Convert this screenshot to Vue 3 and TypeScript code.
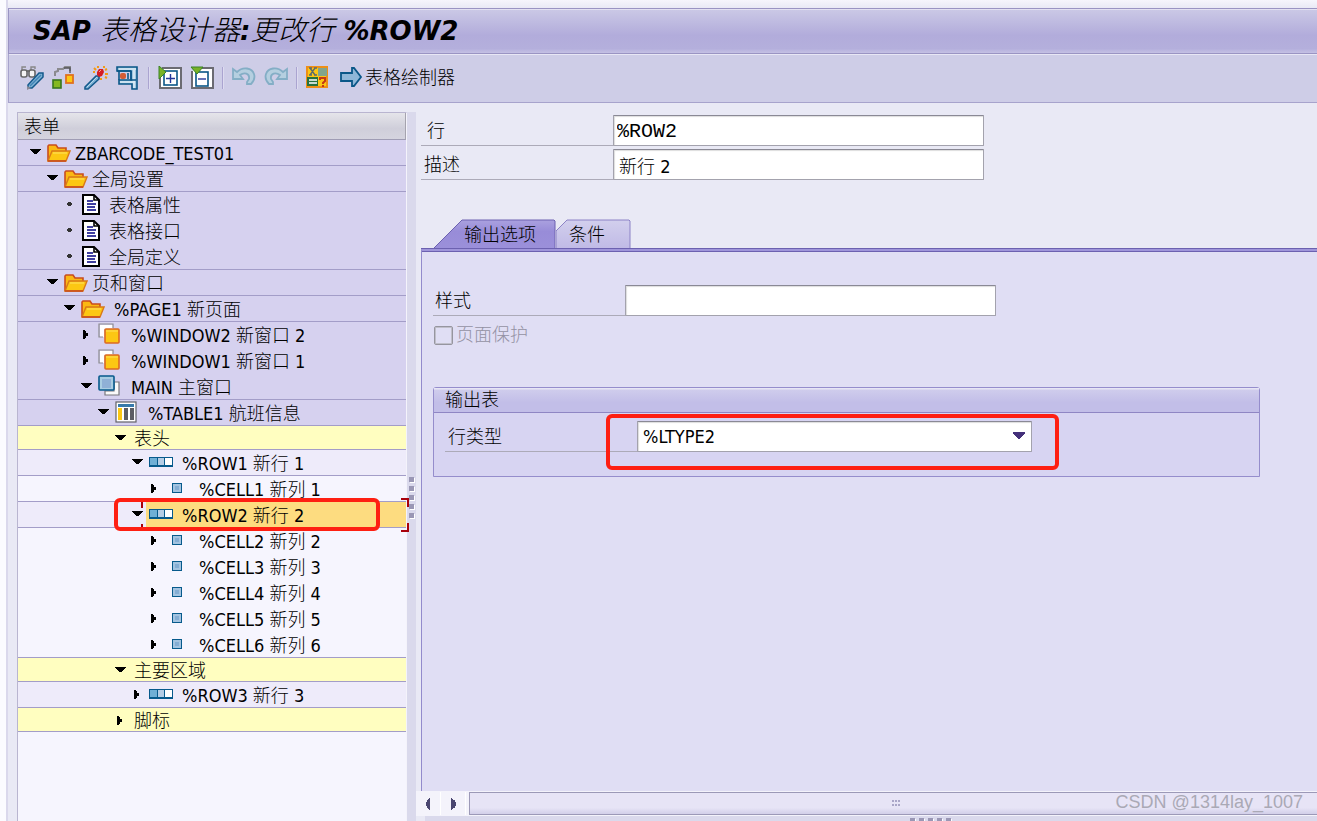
<script setup lang="ts">
import { ref } from 'vue'

type Icon = 'folder' | 'doc' | 'window' | 'main' | 'table' | 'row' | 'cell' | 'none'
type State = 'open' | 'closed' | 'leaf'
type Tone = 'base' | 'section' | 'line' | 'plain'

interface TreeNode {
  level: number
  state: State
  icon: Icon
  name?: string
  text: string
  tone: Tone
  ruled?: boolean
  selected?: boolean
}

const nodes: TreeNode[] = [
  { level: 0, state: 'open', icon: 'folder', text: 'ZBARCODE_TEST01', tone: 'base', ruled: true },
  { level: 1, state: 'open', icon: 'folder', text: '全局设置', tone: 'base', ruled: true },
  { level: 2, state: 'leaf', icon: 'doc', text: '表格属性', tone: 'base' },
  { level: 2, state: 'leaf', icon: 'doc', text: '表格接口', tone: 'base' },
  { level: 2, state: 'leaf', icon: 'doc', text: '全局定义', tone: 'base', ruled: true },
  { level: 1, state: 'open', icon: 'folder', text: '页和窗口', tone: 'base', ruled: true },
  { level: 2, state: 'open', icon: 'folder', name: '%PAGE1', text: '新页面', tone: 'base', ruled: true },
  { level: 3, state: 'closed', icon: 'window', name: '%WINDOW2', text: '新窗口 2', tone: 'base' },
  { level: 3, state: 'closed', icon: 'window', name: '%WINDOW1', text: '新窗口 1', tone: 'base' },
  { level: 3, state: 'open', icon: 'main', name: 'MAIN', text: '主窗口', tone: 'base', ruled: true },
  { level: 4, state: 'open', icon: 'table', name: '%TABLE1', text: '航班信息', tone: 'base', ruled: true },
  { level: 5, state: 'open', icon: 'none', text: '表头', tone: 'section', ruled: true },
  { level: 6, state: 'open', icon: 'row', name: '%ROW1', text: '新行 1', tone: 'line', ruled: true },
  { level: 7, state: 'closed', icon: 'cell', name: '%CELL1', text: '新列 1', tone: 'plain', ruled: true },
  { level: 6, state: 'open', icon: 'row', name: '%ROW2', text: '新行 2', tone: 'line', ruled: true, selected: true },
  { level: 7, state: 'closed', icon: 'cell', name: '%CELL2', text: '新列 2', tone: 'plain' },
  { level: 7, state: 'closed', icon: 'cell', name: '%CELL3', text: '新列 3', tone: 'plain' },
  { level: 7, state: 'closed', icon: 'cell', name: '%CELL4', text: '新列 4', tone: 'plain' },
  { level: 7, state: 'closed', icon: 'cell', name: '%CELL5', text: '新列 5', tone: 'plain' },
  { level: 7, state: 'closed', icon: 'cell', name: '%CELL6', text: '新列 6', tone: 'plain', ruled: true },
  { level: 5, state: 'open', icon: 'none', text: '主要区域', tone: 'section', ruled: true },
  { level: 6, state: 'closed', icon: 'row', name: '%ROW3', text: '新行 3', tone: 'line', ruled: true },
  { level: 5, state: 'closed', icon: 'none', text: '脚标', tone: 'section', ruled: true },
]

const rowName = ref('%ROW2')
const description = ref('新行 2')
const styleName = ref('')
const lineType = ref('%LTYPE2')
</script>

<template>
  <div class="app">
    <header class="titlebar">
      <h1>SAP <span class="han">表格设计器</span>:<span class="han">更改行</span> %ROW2</h1>
    </header>

    <div class="toolbar" role="toolbar" aria-label="工具栏">
      <button class="tool" type="button" aria-label="显示/更改">
        <svg viewBox="0 0 24 24">
          <path d="M2 4V1h4M11 4V1h4v2" fill="none" stroke="#888" stroke-width="1.4" />
          <rect x="1" y="4" width="6" height="7" rx="2" fill="#f4f4f4" stroke="#666" stroke-width="1.6" />
          <rect x="9" y="4" width="6" height="7" rx="2" fill="#f4f4f4" stroke="#666" stroke-width="1.6" />
          <path d="M6 5h4" stroke="#666" stroke-width="1.6" />
          <path d="M8 19L19 7h4v4L12 22H8z" fill="#7fb3d6" stroke="#145a8c" stroke-width="1.5" />
          <path d="M10 20L21 9" stroke="#3f83b4" stroke-width="1.4" />
          <path d="M7 24v-4l4 2z" fill="#8a8a96" />
        </svg>
      </button>
      <button class="tool" type="button" aria-label="检查">
        <svg viewBox="0 0 24 24">
          <path d="M3 10V6l3-1V3h5l2-2h5v4" fill="none" stroke="#8a8a8e" stroke-width="2" />
          <path d="M12 2h6v5" fill="none" stroke="#55555a" stroke-width="1.4" />
          <rect x="1" y="14" width="8" height="8" fill="#84b81f" stroke="#38761d" stroke-width="1.6" />
          <rect x="14" y="9" width="7" height="8" fill="#fcc713" stroke="#e0701e" stroke-width="1.8" />
        </svg>
      </button>
      <button class="tool" type="button" aria-label="激活">
        <svg viewBox="0 0 24 24">
          <path d="M10 2l2 2M14 0v2M20 0v2M23 3l-2 1M24 8h-3M21 11l2 1M17 12v2M9 6h2" stroke="#f39a16" stroke-width="2" />
          <path d="M1 21L12 10h3v3L4 23H1z" fill="#7fb3d6" stroke="#145a8c" stroke-width="1.6" />
          <path d="M3 21L13 11" stroke="#b8d8ec" />
          <path d="M13 6l2-3h4l1 3-2 4-3 1-2-2z" fill="#d51d25" />
          <path d="M15 6l2-2" stroke="#ff9c87" />
        </svg>
      </button>
      <button class="tool" type="button" aria-label="测试">
        <svg viewBox="0 0 24 24">
          <path d="M1 1h20v22h-5v-5H3v-4h12V5H1z" fill="#9fc6df" stroke="#0a5788" stroke-width="1.6" />
          <path d="M3 3h17M4 16h15M18 4v18" stroke="#dcecf6" stroke-width="1.6" />
          <path d="M15 5v9h5M1 5h14" fill="none" stroke="#0a5788" stroke-width="1.4" />
          <path d="M3 5v9" stroke="#0a5788" stroke-width="1.6" />
          <rect x="4" y="7" width="6" height="6" rx="2" fill="#d35c34" />
          <path d="M12 7v6" stroke="#0a5788" stroke-width="1.6" />
        </svg>
      </button>
      <span class="sep"></span>
      <button class="tool" type="button" aria-label="展开">
        <svg viewBox="0 0 24 24">
          <path d="M4 2h19v20H2V10" fill="#fff" stroke="#6b6b72" stroke-width="2" />
          <rect x="6" y="5" width="13" height="14" fill="#fff" stroke="#0a5788" stroke-width="1.6" />
          <path d="M8 12.500h9M12.500 8v9" stroke="#24379a" stroke-width="1.4" />
          <path d="M1 0l7 6-7 7z" fill="#78b226" stroke="#3b8227" />
        </svg>
      </button>
      <button class="tool" type="button" aria-label="压缩">
        <svg viewBox="0 0 24 24">
          <path d="M12 2h11v20H2V5" fill="#fff" stroke="#6b6b72" stroke-width="2" />
          <rect x="6" y="6" width="12" height="14" fill="#fff" stroke="#0a5788" stroke-width="1.6" />
          <path d="M8 13h8" stroke="#24379a" stroke-width="1.4" />
          <path d="M1 1h12L7 8z" fill="#78b226" stroke="#3b8227" />
        </svg>
      </button>
      <span class="sep"></span>
      <button class="tool" type="button" aria-label="撤销">
        <svg viewBox="0 0 24 24">
          <path d="M1 3v10h10l-3-4c4-3 10-2 9 4l-2 3v2h4c3-3 4-7 3-10-2-6-11-8-17-2z" fill="#b5cfe0" stroke="#84aec6" stroke-width="1.8" />
        </svg>
      </button>
      <button class="tool" type="button" aria-label="重做">
        <svg viewBox="0 0 24 24">
          <path d="M23 3v10H13l3-4c-4-3-10-2-9 4l2 3v2H5C2 15 1 11 2 8c2-6 11-8 17-2z" fill="#b5cfe0" stroke="#84aec6" stroke-width="1.8" />
        </svg>
      </button>
      <span class="sep"></span>
      <button class="tool" type="button" aria-label="字段列表">
        <svg viewBox="0 0 24 24">
          <rect x="1" y="1" width="20" height="20" fill="#fcc713" stroke="#ee8f16" stroke-width="2" />
          <rect x="12" y="2" width="9" height="8" fill="#82a58b" />
          <rect x="1" y="11" width="11" height="9" fill="#27713d" />
          <path d="M3 14h8M3 17h8" stroke="#fff" stroke-width="1.6" />
          <path d="M4 2l5 7M9 2L4 9M3 2h3M8 2h3M3 9h3M8 9h3" stroke="#5c6b6b" stroke-width="1.4" />
          <path d="M14 14v-2h5v3l-2 2v1M17 19v2" fill="none" stroke="#c53a16" stroke-width="2" />
        </svg>
      </button>
      <button class="tool labelled" type="button">
        <svg viewBox="0 0 24 24">
          <path d="M1 7h11V2h2l7 9-7 9h-2v-5H1z" fill="#8fb7d8" stroke="#0a5788" stroke-width="1.8" />
        </svg>
        <span>表格绘制器</span>
      </button>
    </div>

    <main class="work">
      <section class="tree" aria-label="表单">
        <h2 class="tree-head">表单</h2>
        <div role="tree" aria-label="表单">
          <div
            v-for="(node, i) in nodes"
            :key="i"
            class="node"
            :class="[node.tone, { ruled: node.ruled, selected: node.selected }]"
            :style="{ '--level': node.level }"
            role="treeitem"
            :aria-level="node.level + 1"
            :aria-selected="!!node.selected"
          >
            <button v-if="node.state !== 'leaf'" class="twist" type="button" :aria-label="node.name || node.text">
              <svg viewBox="0 0 14 14">
                <path v-if="node.state === 'open'" d="M2 4h11v1h-1v1h-1v1h-1v1H9v1H6V8H5V7H4V6H3V5H2z" fill="#000" />
                <path v-else d="M4 3h2v1h1v2h2v3H7v2H6v1H4z" fill="#000" />
              </svg>
            </button>
            <span v-else class="twist">
              <svg viewBox="0 0 14 14"><path d="M5 6h5v2H5zM6 5h3v4H6z" fill="#333" /></svg>
            </span>
            <span class="content" :class="{ named: node.name, bare: node.icon === 'none' }">
              <svg v-if="node.icon === 'folder'" class="icon" viewBox="0 -2 24 24">
                <path d="M1 18V3l1-1h7l2 3h8v3" fill="#fbb812" stroke="#c94d1e" stroke-width="1.6" />
                <path d="M1 18L5 8h18l-4 10z" fill="#fcc713" stroke="#d97a18" stroke-width="1.4" />
                <path d="M1 18h18" stroke="#c94d1e" stroke-width="1.6" />
                <path d="M6 10h14" stroke="#ffe263" />
              </svg>
              <svg v-else-if="node.icon === 'doc'" class="icon" viewBox="0 0 24 24">
                <path d="M2 2h11l5 5v14H2z" fill="#fff" stroke="#000" stroke-width="2" />
                <path d="M13 2v5h5" fill="none" stroke="#000" stroke-width="1.6" />
                <path d="M6 8h6M6 11h9M6 14h8M6 17h9" stroke="#000080" stroke-width="1.6" />
              </svg>
              <svg v-else-if="node.icon === 'window'" class="icon" viewBox="0 0 24 24">
                <path d="M2 2h13v4H6v8H2z" fill="#fff" />
                <path d="M5 14H1V1h14v4" fill="none" stroke="#8b8b8f" stroke-width="1.2" />
                <rect x="7" y="6" width="14" height="14" rx="1" fill="#fcc713" stroke="#dc6a23" stroke-width="1.6" />
                <path d="M8 8h12" stroke="#ffe05a" />
              </svg>
              <svg v-else-if="node.icon === 'main'" class="icon" viewBox="0 0 24 24">
                <path d="M7 16v4h14V7h-5v9z" fill="#fafafa" stroke="#77777c" stroke-width="1.2" />
                <rect x="1" y="1" width="15" height="14" rx="1" fill="#a9cde2" stroke="#075a8c" stroke-width="1.6" />
                <rect x="4" y="4" width="9" height="9" fill="#8fb0d6" />
              </svg>
              <svg v-else-if="node.icon === 'table'" class="icon" viewBox="0 0 24 24">
                <rect x="1" y="1" width="20" height="20" fill="#fff" stroke="#626268" stroke-width="1.2" />
                <path d="M3 4.500h16" stroke="#387aab" stroke-width="3" />
                <path d="M5 7v12" stroke="#fcc713" stroke-width="4" />
                <path d="M11 7v12M17 7v12" stroke="#5d5d63" stroke-width="4" />
              </svg>
              <svg v-else-if="node.icon === 'row'" class="icon" viewBox="0 0 24 24">
                <rect x="0" y="6" width="24" height="10" fill="#075a8c" />
                <rect x="1" y="7" width="7" height="7" fill="#6fafd5" />
                <rect x="9" y="7" width="6" height="7" fill="#b5cde5" />
                <rect x="16" y="7" width="7" height="7" fill="#fff" />
              </svg>
              <svg v-else-if="node.icon === 'cell'" class="icon" viewBox="0 0 24 24">
                <rect x="6" y="6" width="10" height="10" fill="#075a8c" />
                <rect x="7" y="7" width="8" height="8" fill="#a3c3e0" />
                <rect x="9" y="9" width="4" height="4" fill="#84add3" />
              </svg>
              <span class="caption"><template v-if="node.name">{{ node.name }}&nbsp;</template>{{ node.text }}</span>
            </span>
            <svg v-if="node.selected" class="brackets" viewBox="0 0 268 34" aria-hidden="true">
              <path d="M1 4v6M1 26v6h8M260 1h7v8M260 33h7v-8" fill="none" stroke="#a8000b" stroke-width="2" />
            </svg>
            <span v-if="node.selected" class="mark mark-row"></span>
          </div>
        </div>
      </section>

      <div class="splitter" role="separator" aria-orientation="vertical"><i v-for="n in 5" :key="n"></i></div>

      <section class="detail">
        <form class="head-form" @submit.prevent>
          <div class="field">
            <label for="row-name" class="indent">行</label>
            <input id="row-name" v-model="rowName" class="mono" type="text" />
          </div>
          <div class="field">
            <label for="row-desc">描述</label>
            <input id="row-desc" v-model="description" type="text" />
          </div>
        </form>

        <div class="tabs" role="tablist">
          <button class="tab active" role="tab" type="button" aria-selected="true">
            <svg viewBox="0 0 123 30" aria-hidden="true">
              <defs>
                <linearGradient id="tabOn" x2="0" y2="1"><stop offset="0" stop-color="#aaa1df" /><stop offset="0.4" stop-color="#988cd8" /><stop offset="1" stop-color="#9b90da" /></linearGradient>
              </defs>
              <path d="M0 30L29 1h92l1 1v28z" fill="url(#tabOn)" stroke="#6c61b0" />
            </svg>
            <span>输出选项</span>
          </button>
          <button class="tab" role="tab" type="button" aria-selected="false">
            <svg viewBox="0 0 75 30" aria-hidden="true">
              <defs>
                <linearGradient id="tabOff" x2="0" y2="1"><stop offset="0" stop-color="#d2cfed" /><stop offset="1" stop-color="#c0bae6" /></linearGradient>
              </defs>
              <path d="M0 30V12L11 1h62l1 1v28z" fill="url(#tabOff)" stroke="#8c82c6" />
            </svg>
            <span>条件</span>
          </button>
        </div>

        <div class="panel" role="tabpanel">
          <div class="field">
            <label for="style-name">样式</label>
            <input id="style-name" v-model="styleName" type="text" />
          </div>
          <label class="check"><input type="checkbox" disabled />页面保护</label>

          <fieldset class="group">
            <legend>输出表</legend>
            <div class="field">
              <label for="line-type">行类型</label>
              <span class="combo">
                <select id="line-type" v-model="lineType">
                  <option>%LTYPE1</option>
                  <option>%LTYPE2</option>
                </select>
                <svg class="caret" viewBox="0 0 14 10" aria-hidden="true">
                  <path d="M1 1h12v2h-1v1h-1v1h-1v1H9v1H8v1H6V7H5V6H4V5H3V4H2V3H1z" fill="#44307a" />
                </svg>
                <span class="mark mark-combo"></span>
              </span>
            </div>
          </fieldset>
        </div>

        <div class="scroll">
          <button type="button" aria-label="向左滚动"><svg viewBox="0 0 12 14"><path d="M8 1v12H7v-1H6v-1H5V9H4V5h1V3h1V2h1V1z" fill="#4a4670" /></svg></button>
          <button type="button" aria-label="向右滚动"><svg viewBox="0 0 12 14"><path d="M4 1v12h1v-1h1v-1h2V9h1V5H8V3H6V2H5V1z" fill="#4a4670" /></svg></button>
          <div class="thumb"><svg viewBox="0 0 9 7"><path d="M0 1h2M3 1h2M6 1h2M0 5h2M3 5h2M6 5h2" stroke="#aaa6c8" stroke-width="2" /></svg></div>
        </div>
        <div class="bottom-splitter" role="separator"><i v-for="n in 5" :key="n"></i></div>
      </section>
    </main>

    <p class="credit">CSDN @1314lay_1007</p>
  </div>
</template>

<style>
html,
body {
  margin: 0;
  background: #fbfbff;
}
</style>

<style scoped>
* {
  box-sizing: border-box;
}

.app {
  position: relative;
  display: flex;
  flex-direction: column;
  height: 100vh;
  min-height: 780px;
  padding-top: 8px;
  padding-left: 8px;
  overflow: hidden;
  color: #000;
  font: 300 18px/24px "DejaVu Sans Condensed", "Noto Sans CJK SC", sans-serif;
  background: linear-gradient(90deg, #fbfbff 0 6px, #dad8ec 6px 8px, transparent 8px), linear-gradient(#f6f5fc, #e9e9f5 8px);
}

button,
input,
select {
  margin: 0;
  padding: 0;
  border: 0;
  font: inherit;
  color: inherit;
  background: none;
}

svg {
  display: block;
}

.titlebar {
  flex: none;
  height: 46px;
  padding-left: 24px;
  border: 1px solid #9a94c3;
  border-width: 1px 0 1px 1px;
  box-shadow: inset 0 1px #e3e1f2;
  background: linear-gradient(#cbc9e6, #b2acdb 60%, #b4afdc 90%, #c4c0e4);
}

h1 {
  margin: 0;
  font: italic bold 26px/44px "DejaVu Sans", "Noto Sans CJK SC", sans-serif;
  white-space: nowrap;
}

.han {
  font-weight: 300;
  font-size: 28px;
}

.toolbar {
  display: flex;
  flex: none;
  align-items: center;
  gap: 8px;
  height: 49px;
  padding-left: 11px;
  border-left: 1px solid #a7a3cc;
  border-bottom: 1px solid #a7a3cc;
  background: #cecde7;
  box-shadow: inset 0 1px #e8e7f5;
}

.tool {
  display: flex;
  align-items: center;
  gap: 1px;
  white-space: nowrap;
}

.tool svg {
  width: 24px;
  height: 24px;
}

.labelled {
  padding-left: 2px;
}

.sep {
  width: 2px;
  height: 22px;
  background: linear-gradient(90deg, #aaa4d0 50%, #dddbf0 50%);
}

.work {
  display: flex;
  flex: 1;
  min-height: 0;
  padding: 9px 0 0 9px;
}

.tree {
  flex: none;
  width: 390px;
  border: 1px solid #b9b5d0;
  border-width: 1px 1px 0;
  border-right-color: #f4f3fb;
  background: #f6f5fe;
}

.tree-head {
  height: 27px;
  margin: 0;
  padding-left: 6px;
  border-right: 1px solid #a5a3ae;
  border-bottom: 1px solid #9f9cb4;
  font: inherit;
  line-height: 28px;
  background: linear-gradient(#e5e5ea, #cfceda 60%, #d5d4df);
}

.node {
  position: relative;
  display: flex;
  align-items: stretch;
  height: 26px;
  padding-left: calc(10px + var(--level) * 17px);
  border-bottom: 1px solid transparent;
  white-space: nowrap;
}

.ruled {
  border-bottom-color: #a39dc8;
}

.base {
  background: #d6d1ef;
}

.section {
  height: 24px;
  background: #fffec0;
}

.section + .node,
.section + .section {
  border-top: 0;
}

.section:first-child {
  border-top: 0;
}

.line {
  background: #eeebfa;
}

.twist {
  flex: none;
  width: 14px;
  height: 14px;
  margin-top: 5px;
}

.content {
  display: flex;
  flex: 1;
  align-items: center;
  gap: 4px;
  padding-left: 5px;
}

.named {
  gap: 9px;
}

.bare {
  padding-left: 7px;
}

.selected .content {
  margin-left: 2px;
  padding-left: 3px;
  background: #fddc80;
}

.icon {
  flex: none;
  width: 24px;
  height: 24px;
}

.caption {
  padding-top: 2px;
  line-height: 24px;
}

.brackets {
  position: absolute;
  top: -4px;
  left: 123px;
  z-index: 2;
  width: 268px;
  height: 34px;
}

.mark {
  position: absolute;
  z-index: 3;
  border: 4px solid #fe1f12;
  border-radius: 6px;
  pointer-events: none;
}

.mark-row {
  top: -4px;
  left: 96px;
  width: 266px;
  height: 33px;
}

.splitter {
  display: flex;
  flex: none;
  flex-direction: column;
  align-items: center;
  gap: 4px;
  width: 9px;
  padding-top: 365px;
  background: #dad9ec;
}

.splitter i,
.bottom-splitter i {
  width: 5px;
  height: 5px;
  background: #9a97b5;
  box-shadow: 1px 1px #fff;
}

.detail {
  display: flex;
  flex: 1;
  flex-direction: column;
  min-width: 0;
  padding-left: 5px;
}

.head-form {
  display: grid;
  gap: 3px;
  padding-top: 3px;
}

.field {
  display: flex;
}

.field label {
  flex: none;
  width: 192px;
  height: 31px;
  padding-left: 3px;
  border-bottom: 1px solid #acaab8;
  line-height: 31px;
}

.field .indent {
  padding-left: 6px;
}

.field input,
.field select {
  width: 371px;
  height: 31px;
  padding: 0 5px;
  border: 1px solid #a3a2ad;
  border-top-color: #8a8995;
  box-shadow: inset 1px 1px 1px #ddd;
  border-radius: 1px;
  background: #fff;
}

.field .mono {
  padding: 2px 3px 0;
  font-family: "Liberation Mono", monospace;
  font-size: 20px;
}

.tabs {
  display: flex;
  margin-top: 39px;
  padding-left: 12px;
}

.tab {
  position: relative;
  width: 75px;
  height: 30px;
  padding-left: 13px;
  text-align: left;
  line-height: 32px;
}

.tab.active {
  width: 123px;
  padding-left: 31px;
}

.tab svg {
  position: absolute;
  inset: 0;
  width: 100%;
  height: 30px;
}

.tab span {
  position: relative;
}

.panel {
  position: relative;
  flex: 1;
  padding: 34px 57px 0 11px;
  border-top: 2px solid #9f95da;
  border-left: 1px solid #938bcc;
  background: #e0def4;
  box-shadow: inset 0 1px #6c61b0, 0 -1px #6c61b0;
}

.panel > .field label {
  padding-left: 2px;
}

.check {
  display: flex;
  width: max-content;
  align-items: center;
  gap: 3px;
  margin-top: 7px;
  color: #9391a3;
}

.check input {
  appearance: none;
  width: 19px;
  height: 19px;
  margin-left: 1px;
  border: 1px solid #96959f;
  border-radius: 2px;
  box-shadow: inset 0 0 0 1px #c0bfca;
}

.group {
  display: block;
  max-width: 827px;
  height: 90px;
  min-width: 0;
  margin: 40px 0 0;
  padding: 0 0 0 11px;
  border: 1px solid #958dcc;
  border-radius: 3px 3px 0 0;
  background: #d7d4f2;
}

.group legend {
  float: left;
  width: calc(100% + 11px);
  height: 25px;
  margin: 0 0 8px -11px;
  padding: 0 0 0 11px;
  border-bottom: 1px solid #8f86c4;
  line-height: 24px;
  background: linear-gradient(#e7e5f5 1px, #cfccec 2px, #c2bee8 60%);
}

.group .field {
  clear: both;
}

.combo {
  position: relative;
}

.combo select {
  display: block;
  width: 395px;
  appearance: none;
}

.caret {
  position: absolute;
  top: 10px;
  right: 6px;
  width: 14px;
  height: 10px;
}

.mark-combo {
  top: -7px;
  left: -31px;
  width: 453px;
  height: 56px;
}

.scroll {
  display: flex;
  flex: none;
  height: 25px;
  margin-left: -5px;
  padding: 1px 0;
  background: #f4f3fb;
}

.scroll button {
  display: grid;
  place-items: center;
  width: 25px;
  border-right: 1px solid #fff;
}

.scroll button svg {
  width: 12px;
  height: 14px;
}

.thumb {
  display: grid;
  flex: 1;
  place-items: center;
  margin: 0 -6px 0 3px;
  border: 1px solid #9c99b7;
  background: linear-gradient(#e7e4f6 70%, #d2cfe9);
}

.thumb svg {
  width: 9px;
  height: 7px;
}

.bottom-splitter {
  display: flex;
  flex: none;
  gap: 4px;
  justify-content: center;
  height: 5px;
  margin-left: 4px;
  padding: 2px 0 0 118px;
  background: #dad9ec;
}

.credit {
  position: absolute;
  right: 14px;
  bottom: 7px;
  margin: 0;
  color: #aaa9b5;
  font: 18px/24px "Liberation Sans", sans-serif;
  white-space: nowrap;
}
</style>
